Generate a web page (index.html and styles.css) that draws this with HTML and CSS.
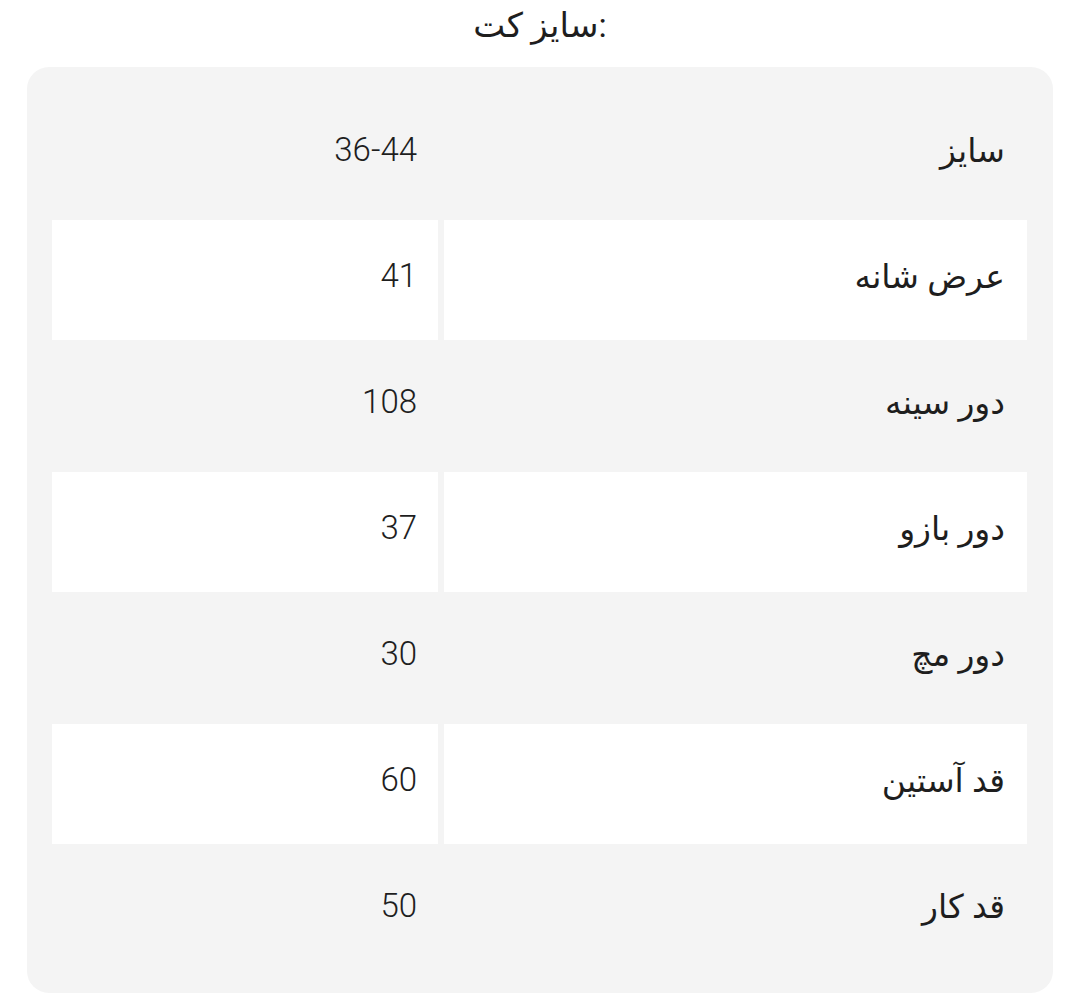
FILE: index.html
```html
<!DOCTYPE html>
<html lang="fa">
<head>
<meta charset="utf-8">
<link rel="stylesheet" href="styles.css">
</head>
<body>
<h1 class="title" dir="ltr">سایز کت:</h1>
<div class="card">
  <div class="table" dir="rtl">
    <div class="cell label">سایز</div><div class="cell value">36-44</div>
    <div class="cell label alt">عرض شانه</div><div class="cell value alt">41</div>
    <div class="cell label">دور سینه</div><div class="cell value">108</div>
    <div class="cell label alt">دور بازو</div><div class="cell value alt">37</div>
    <div class="cell label">دور مچ</div><div class="cell value">30</div>
    <div class="cell label alt">قد آستین</div><div class="cell value alt">60</div>
    <div class="cell label">قد کار</div><div class="cell value">50</div>
  </div>
</div>
</body>
</html>
```
FILE: styles.css
```css
html, body {
  margin: 0;
  padding: 0;
  background: #ffffff;
}
body {
  width: 1080px;
  height: 996px;
  font-family: Roboto, "DejaVu Sans", sans-serif;
  color: #1e1e1e;
  overflow: hidden;
}
.title {
  margin: 0;
  height: 67px;
  box-sizing: border-box;
  padding-top: 3px;
  text-align: center;
  font-size: 34px;
  font-weight: normal;
  line-height: 44px;
}
.card {
  margin-left: 27px;
  width: 1026px;
  height: 926px;
  box-sizing: border-box;
  background: #f4f4f4;
  border-radius: 22px;
  padding: 27px 26px 0 25px;
}
.table {
  display: grid;
  grid-template-columns: 583px 386px;
  grid-auto-rows: 120px;
  gap: 6px;
}
.cell {
  display: flex;
  align-items: center;
  padding-right: 22px;
  line-height: 1;
}
.value {
  font-size: 33px;
  font-weight: 300;
  padding-right: 21px;
  padding-bottom: 10px;
}
.label {
  font-size: 33px;
  padding-bottom: 8px;
}
.alt {
  background: #ffffff;
}
```
